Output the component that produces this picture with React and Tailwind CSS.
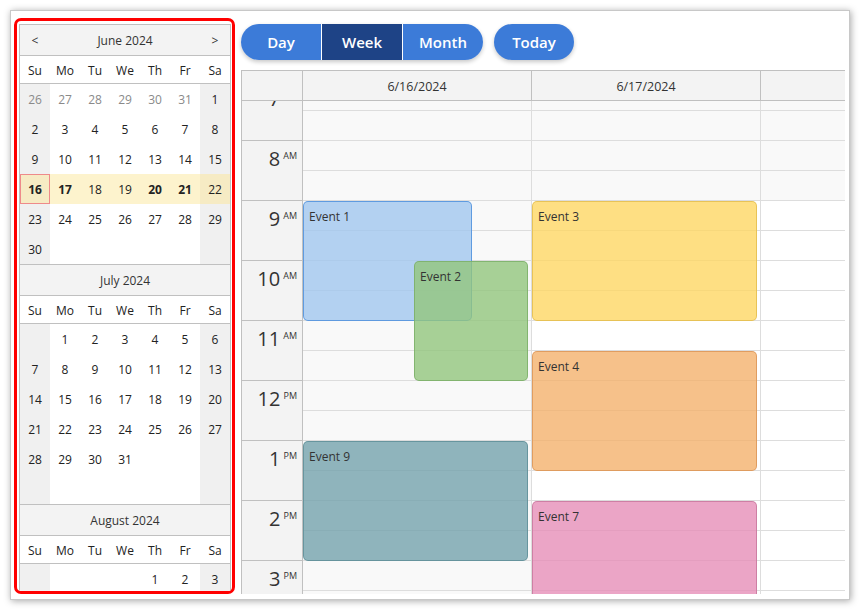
import React from 'react';

const months = [
  { title: 'June 2024', start: 6, days: 30, prev: [26, 27, 28, 29, 30, 31], arrows: true, bold: [16, 17, 20, 21], week: 3, today: 16, rows: 6 },
  { title: 'July 2024', start: 1, days: 31, prev: [], bold: [], week: -1, rows: 6 },
  { title: 'August 2024', start: 4, days: 31, prev: [], bold: [], week: -1, rows: 1 },
];

const dayNames = ['Su', 'Mo', 'Tu', 'We', 'Th', 'Fr', 'Sa'];

const hours = [7, 8, 9, 10, 11, 12, 13, 14, 15];

const columns = [
  { title: '6/16/2024', weekend: true },
  { title: '6/17/2024', weekend: false },
  { title: '', weekend: false },
];

const events = [
  { col: 0, text: 'Event 1', top: 120, left: 0, width: 169, height: 120, cls: 'bg-[#a1c7efcc] border-[#4a8ddccc]' },
  { col: 0, text: 'Event 2', top: 180, left: 111, width: 114, height: 120, cls: 'bg-[#92c67dcc] border-[#7aae67cc]' },
  { col: 0, text: 'Event 9', top: 360, left: 0, width: 225, height: 120, cls: 'bg-[#74a3accc] border-[#5e8d96cc]' },
  { col: 1, text: 'Event 3', top: 120, left: 0, width: 225, height: 120, cls: 'bg-[#fed764cc] border-[#e2bd4ccc]' },
  { col: 1, text: 'Event 4', top: 270, left: 0, width: 225, height: 120, cls: 'bg-[#f4b16dcc] border-[#db9556cc]' },
  { col: 1, text: 'Event 7', top: 420, left: 0, width: 225, height: 120, cls: 'bg-[#e68eb8cc] border-[#c7769ccc]' },
];

const MonthBlock = ({ m }) => {
  const cells = [];
  for (let i = 0; i < m.rows * 7; i++) {
    const d = i - m.start + 1;
    let text = '';
    let other = false;
    if (d < 1) {
      if (m.prev.length) {
        text = m.prev[i];
        other = true;
      }
    } else if (d <= m.days) {
      text = d;
    }
    const col = i % 7;
    const row = Math.floor(i / 7);
    const weekend = col === 0 || col === 6;
    const inWeek = row === m.week;
    let bg = weekend ? 'bg-[#f0f0f0]' : 'bg-white';
    if (inWeek) bg = weekend ? 'bg-[#f6ebc4]' : 'bg-[#fdf3cd]';
    const isToday = !other && d === m.today;
    const bold = !other && m.bold.includes(d);
    cells.push(
      <div
        key={i}
        className={`h-[30px] flex items-center justify-center pt-[2px] text-[12px] ${bg} ${other ? 'text-[#8a8a8a]' : 'text-[#222]'} ${bold ? 'font-bold' : ''} ${isToday ? 'border border-[#ee8a8a]' : ''}`}
      >
        {text}
      </div>
    );
  }
  return (
    <div className="border-t border-[#c0c0c0]">
      <div className="h-[31px] bg-[#f3f3f3] border-b border-[#c0c0c0] flex items-center pt-[2px] text-[12px] text-[#333]">
        <div className="w-[30px] text-center">{m.arrows ? '<' : ''}</div>
        <div className="flex-1 text-center">{m.title}</div>
        <div className="w-[30px] text-center">{m.arrows ? '>' : ''}</div>
      </div>
      <div className="h-[28px] grid grid-cols-7 bg-white border-b border-[#c0c0c0] text-[12px] text-[#222]">
        {dayNames.map((n) => (
          <div key={n} className="flex items-center justify-center pt-[2px]">{n}</div>
        ))}
      </div>
      <div className="grid grid-cols-7">{cells}</div>
    </div>
  );
};

const Navigator = () => (
  <div className="w-[221px] h-[576px] shrink-0 border-[3px] border-[#ff0000] rounded-[7px] overflow-hidden pl-[2px] pt-[3px] bg-white">
    <div className="w-[212px] border-x border-[#c0c0c0]">
      {months.map((m) => (
        <MonthBlock key={m.title} m={m} />
      ))}
    </div>
  </div>
);

const Toolbar = () => (
  <div className="h-[36px] flex items-center gap-[11px] text-[15px] font-semibold text-white">
    <div className="flex h-[36px] rounded-full overflow-hidden shadow-[0_2px_4px_rgba(0,0,0,0.22)]">
      <div className="w-[80px] flex items-center justify-center bg-[#3c7bd8]">Day</div>
      <div className="w-[81px] flex items-center justify-center bg-[#1e4386] border-l border-white">Week</div>
      <div className="w-[81px] flex items-center justify-center bg-[#3c7bd8] border-l border-white">Month</div>
    </div>
    <div className="w-[80px] h-[36px] flex items-center justify-center rounded-full bg-[#3c7bd8] shadow-[0_2px_4px_rgba(0,0,0,0.22)]">Today</div>
  </div>
);

const HourLabel = ({ h }) => {
  const num = h > 12 ? h - 12 : h;
  const suffix = h >= 12 ? 'PM' : 'AM';
  return (
    <div className="h-[60px] border-b border-[#c0c0c0] flex justify-end items-start pt-[8px] pr-[5px] text-[#333]">
      <span className="text-[20px] leading-none">{num}</span>
      <span className="text-[9px] leading-none ml-[3px] mt-[2px]">{suffix}</span>
    </div>
  );
};

const DayColumn = ({ c, index }) => {
  const slots = [];
  hours.forEach((h) => {
    [0, 1].forEach((half) => {
      const gray = c.weekend || h < 9;
      slots.push(
        <div key={`${h}-${half}`} className={`h-[30px] border-b border-[#dddddd] ${gray ? 'bg-[#f9f9f9]' : 'bg-white'}`} />
      );
    });
  });
  return (
    <div className="w-[229px] shrink-0 border-r border-[#dddddd] relative">
      {slots}
      {events
        .filter((e) => e.col === index)
        .map((e) => (
          <div
            key={e.text}
            className={`absolute border rounded-[5px] pl-[5px] pt-[7px] text-[12px] leading-[16px] text-[#333] ${e.cls}`}
            style={{ top: e.top, left: e.left, width: e.width, height: e.height }}
          >
            {e.text}
          </div>
        ))}
    </div>
  );
};

const Calendar = () => (
  <div className="mt-[10px] w-[604px] h-[524px] overflow-hidden border-l border-t border-[#c0c0c0] flex flex-col">
    <div className="h-[30px] shrink-0 flex border-b border-[#c0c0c0] bg-[#f3f3f3] text-[12.5px] text-[#333]">
      <div className="w-[61px] shrink-0 border-r border-[#c0c0c0]" />
      {columns.map((c, i) => (
        <div key={i} className="w-[229px] shrink-0 border-r border-[#c0c0c0] flex items-center justify-center pt-[3px]">
          {c.title}
        </div>
      ))}
    </div>
    <div className="flex-1 overflow-hidden">
      <div className="flex -mt-[20px]">
        <div className="w-[61px] shrink-0 bg-[#f3f3f3] border-r border-[#c0c0c0]">
          {hours.map((h) => (
            <HourLabel key={h} h={h} />
          ))}
        </div>
        {columns.map((c, i) => (
          <DayColumn key={i} c={c} index={i} />
        ))}
      </div>
    </div>
  </div>
);

const App = () => {
  return (
    <div className="min-h-screen bg-white p-[10px] font-['Open_Sans',sans-serif]">
      <div className="w-[840px] h-[590px] bg-white border border-[#c8c8c8] shadow-[1px_1px_7px_rgba(0,0,0,0.35)] flex items-start pl-[3px] pt-[7px] overflow-hidden">
        <Navigator />
        <div className="ml-[6px] mt-[6px] flex flex-col">
          <Toolbar />
          <Calendar />
        </div>
      </div>
    </div>
  );
};

export default App;
